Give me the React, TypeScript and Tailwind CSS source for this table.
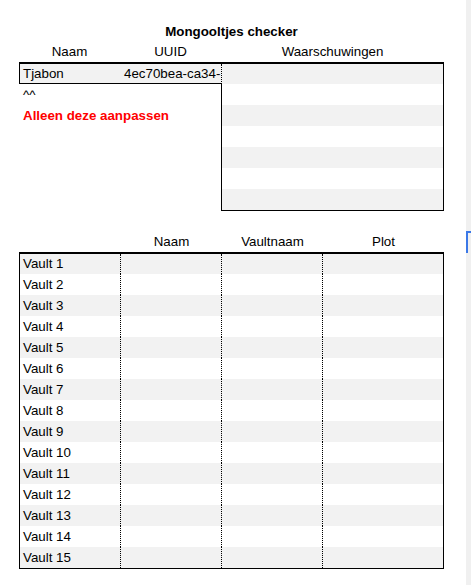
import { FunctionComponent } from "react";

const vaults = Array.from({ length: 15 }, (_, i) => `Vault ${i + 1}`);
const warningRows = [1, 2, 3, 4, 5, 6];

const App: FunctionComponent = () => {
  return (
    <div className="relative w-[471px] h-[585px] overflow-hidden bg-white text-[13.33px] leading-none text-black font-['Liberation_Sans',Arial,sans-serif]">
      <div className="w-[444px] pl-[19px] pt-[21px]">
        {/* title */}
        <div className="h-[21px] flex items-center justify-center font-bold">
          Mongooltjes checker
        </div>

        {/* headers of the user table */}
        <div className="h-[20px] grid grid-cols-[101px_101px_1fr] items-center text-center">
          <span>Naam</span>
          <span>UUID</span>
          <span>Waarschuwingen</span>
        </div>

        {/* user table */}
        <div className="border-t-2 border-black grid grid-cols-[202px_1fr]">
          <div className="flex flex-col">
            <div className="h-[20px] grid grid-cols-[100px_1fr] items-center border-l border-b border-black bg-[#f2f2f2]">
              <span className="pl-[3px]">Tjabon</span>
              <span className="pl-[4px] whitespace-nowrap">4ec70bea-ca34-</span>
            </div>
            <div className="h-[21px] flex items-center pl-[4px]">^^</div>
            <div className="h-[21px] flex items-center pl-[4px] font-bold text-[#ff0000]">
              Alleen deze aanpassen
            </div>
          </div>
          <div className="flex flex-col border-r border-b border-black">
            <div className="h-[20px] border-l border-dotted border-black bg-[#f2f2f2]" />
            {warningRows.map((r) => (
              <div
                key={r}
                className={`h-[21px] border-l border-black ${
                  r % 2 === 0 ? "bg-[#f2f2f2]" : "bg-white"
                }`}
              />
            ))}
          </div>
        </div>

        <div className="h-[20px]" />

        {/* headers of the vault table */}
        <div className="h-[21px] grid grid-cols-[102px_101px_101px_1fr] items-center text-center">
          <span />
          <span>Naam</span>
          <span>Vaultnaam</span>
          <span>Plot</span>
        </div>

        {/* vault table */}
        <div className="border-t-2 border-l border-r border-b border-black">
          {vaults.map((v, i) => (
            <div
              key={v}
              className={`grid grid-cols-[101px_101px_101px_1fr] ${
                i === 0 ? "h-[20px]" : "h-[21px]"
              } ${i % 2 === 0 ? "bg-[#f2f2f2]" : "bg-white"}`}
            >
              <div className="flex items-center pl-[3px] border-r border-dotted border-black">
                {v}
              </div>
              <div className="border-r border-dotted border-black" />
              <div className="border-r border-dotted border-black" />
              <div />
            </div>
          ))}
        </div>
      </div>

      {/* window edge */}
      <div className="absolute right-0 top-0 w-[5px] h-full bg-[#f0f0f0]" />
      <div className="absolute left-[466px] top-[231px] w-[5px] h-[22px] border-l-2 border-t-2 border-[#3b78e7]" />
    </div>
  );
};

export default App;
